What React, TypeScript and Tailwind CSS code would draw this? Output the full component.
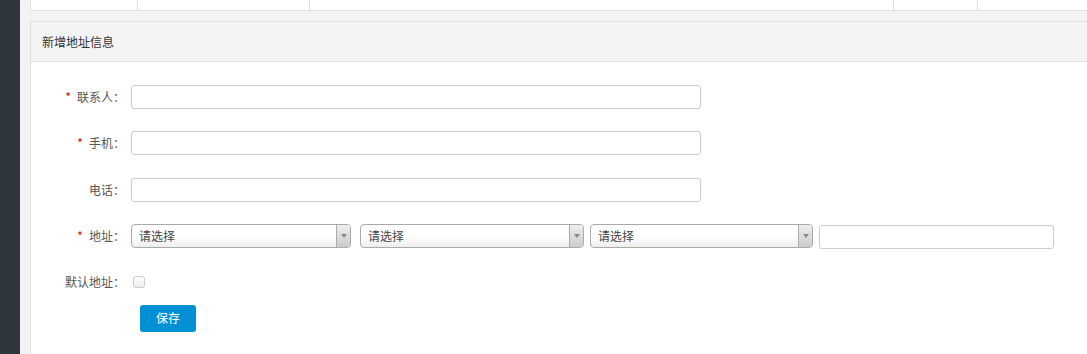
import React from "react";

const font = { fontFamily: '"Noto Sans CJK SC", "Liberation Sans", sans-serif' };

function Label({ text, required }: { text: string; required?: boolean }) {
  return (
    <div className="w-[100px] shrink-0 flex items-center justify-end pr-[6px] text-[12px] text-[#555]">
      {required && <span className="text-[#d00] mr-[6px] text-[12px]">*</span>}
      <span>{text}：</span>
    </div>
  );
}

function TextInput({ w }: { w: string }) {
  return <input className={`${w} h-[24px] border border-[#ccc] rounded-[3px] bg-white outline-none px-2 text-[12px]`} />;
}

function Select({ w }: { w: string }) {
  return (
    <div className={`${w} h-[24px] flex border border-[#aaa] rounded-[4px] bg-gradient-to-b from-white from-50% to-[#eee] overflow-hidden`}>
      <span className="flex-1 pl-[7px] text-[12px] leading-[22px] text-[#444]">请选择</span>
      <span className="w-[14px] border-l border-[#aaa] bg-gradient-to-b from-[#eee] to-[#ccc] flex items-center justify-center">
        <svg width="6" height="4" viewBox="0 0 6 4"><path d="M0 0h6L3 4z" fill="#888" /></svg>
      </span>
    </div>
  );
}

export default function App() {
  return (
    <div className="w-[1087px] h-[354px] flex overflow-hidden bg-[#f3f3f3]" style={font}>
      <aside className="w-[20px] shrink-0 bg-[#2e353d]" />
      <main className="flex-1 pl-[10px] flex flex-col">
        <div className="h-[11px] flex bg-white border-b border-[#e0e0e0] border-l">
          <div className="w-[107px] border-r border-[#e0e0e0]" />
          <div className="w-[172px] border-r border-[#e0e0e0]" />
          <div className="w-[584px] border-r border-[#e0e0e0]" />
          <div className="w-[84px] border-r border-[#e0e0e0]" />
          <div className="flex-1" />
        </div>
        <section className="mt-[10px] flex-1 border-t border-l border-[#e0e0e0] bg-white">
          <header className="h-[40px] bg-[#f5f4f4] border-b border-[#e0e0e0] flex items-center pl-[11px] text-[12px] text-[#333]">
            新增地址信息
          </header>
          <div className="pt-[23px] flex flex-col">
            <div className="flex items-center h-[24px]">
              <Label text="联系人" required />
              <TextInput w="w-[570px]" />
            </div>
            <div className="flex items-center h-[24px] mt-[22px]">
              <Label text="手机" required />
              <TextInput w="w-[570px]" />
            </div>
            <div className="flex items-center h-[24px] mt-[23px]">
              <Label text="电话" />
              <TextInput w="w-[570px]" />
            </div>
            <div className="flex items-center h-[24px] mt-[22px]">
              <Label text="地址" required />
              <Select w="w-[220px]" />
              <div className="ml-[9px]"><Select w="w-[224px]" /></div>
              <div className="ml-[6px]"><Select w="w-[223px]" /></div>
              <div className="ml-[6px]"><TextInput w="w-[235px]" /></div>
            </div>
            <div className="flex items-center h-[24px] mt-[22px]">
              <Label text="默认地址" />
              <span className="ml-[2px] w-[12px] h-[12px] border border-[#ccc] rounded-[3px] bg-gradient-to-b from-white to-[#eee]" />
            </div>
            <div className="mt-[10px] pl-[109px]">
              <button className="w-[56px] h-[27px] bg-[#0090d3] rounded-[3px] text-white text-[12px]">保存</button>
            </div>
          </div>
        </section>
      </main>
    </div>
  );
}
